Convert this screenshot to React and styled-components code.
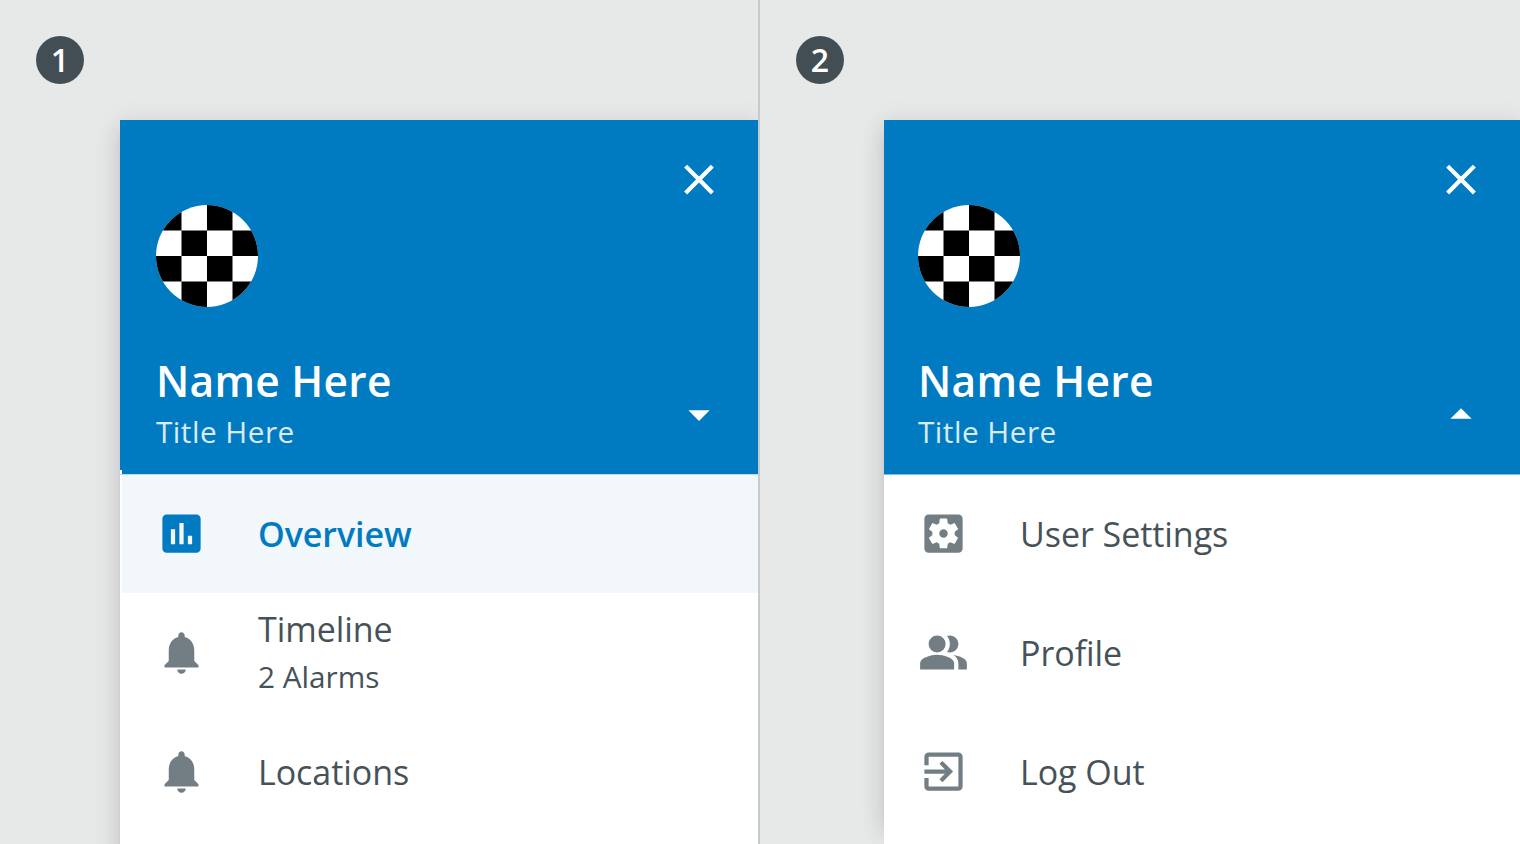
import React from "react";
import styled, { createGlobalStyle } from "styled-components";

const Global = createGlobalStyle`
  * { box-sizing: border-box; }
  body { margin: 0; background: #e7e9e8; font-family: "Open Sans", "Liberation Sans", sans-serif; }
`;

const Page = styled.div`
  display: grid;
  grid-template-columns: 760px 760px;
  height: 844px;
  overflow: hidden;
`;

const Pane = styled.section`
  display: flex;
  flex-direction: column;
  height: 844px;
  overflow: hidden;
  padding: 36px 0 0 ${(p) => p.$inset}px;
  border-right: ${(p) => (p.$divided ? "2px solid #c8c9ca" : "none")};
`;

const Step = styled.div`
  width: 48px;
  height: 48px;
  margin: 0 0 36px ${(p) => p.$shift}px;
  flex: none;
  border-radius: 50%;
  background: #434e54;
  color: #fff;
  font-size: 32px;
  font-weight: 600;
  line-height: 47px;
  text-align: center;
`;

const Drawer = styled.div`
  position: relative;
  isolation: isolate;
  flex: none;
  height: 724px;

  &::before {
    content: "";
    position: absolute;
    z-index: -1;
    inset: 0 0 ${(p) => p.$shadowEnd}px 0;
    box-shadow: 0 8px 10px -5px rgba(0, 15, 40, 0.12), 0 10px 22px 1px rgba(0, 15, 40, 0.09),
      0 5px 28px 3px rgba(0, 15, 40, 0.07);
  }
`;

const Surface = styled.div`
  height: 724px;
  background: #fff;
`;

const Glyph = styled.svg`
  display: block;
  flex: none;
  width: 51px;
  height: 51px;
  fill: currentColor;
`;

const Header = styled.header`
  display: flex;
  flex-direction: column;
  height: 354px;
  padding: 34px 33px 0 ${(p) => p.$pad}px;
  background: ${(p) =>
    p.$notched
      ? "linear-gradient(#fff, #fff) left bottom / 2px 4px no-repeat, #007bc1"
      : "#007bc1"};
  color: #fff;

  ${Glyph} {
    width: 52px;
  }
`;

const CloseButton = styled.div`
  align-self: flex-end;
  height: 51px;
`;

const Avatar = styled.svg`
  display: block;
  width: 102px;
  height: 102px;
`;

const Account = styled.div`
  display: flex;
  justify-content: space-between;
  margin-top: 44px;
`;

const Name = styled.div`
  font-size: 42.5px;
  line-height: 59px;
  font-weight: 600;
  letter-spacing: 0.27px;
  white-space: nowrap;
`;

const Title = styled.div`
  font-size: 29.75px;
  line-height: 42px;
  margin-top: 1px;
  letter-spacing: 0.48px;
  opacity: 0.85;
`;

const Caret = styled.div`
  padding-top: 38px;
`;

const List = styled.nav`
  display: flex;
  flex-direction: column;
  border-top: 1px solid ${(p) => (p.$tinted ? "#bcdaec" : "#80bde0")};
`;

const Item = styled.div`
  display: flex;
  align-items: center;
  height: 119px;
  margin-left: ${(p) => p.$edge}px;
  padding-left: 34px;
  gap: 51px;
  background: ${(p) => (p.$active ? "#f2f7fb" : "transparent")};
  color: ${(p) => (p.$active ? "#007bc1" : "#727e84")};

  &:first-child {
    height: 118px;
  }

  &:first-child > ${Glyph} {
    margin-bottom: 1px;
  }
`;

const Label = styled.div`
  font-size: 34px;
  line-height: 48px;
  letter-spacing: -0.05px;
  font-weight: ${(p) => (p.$active ? 600 : 400)};
  color: ${(p) => (p.$active ? "#007bc1" : "#465258")};
`;

const Note = styled.div`
  font-size: 29.75px;
  line-height: 48px;
  color: #465258;
`;

const paths = {
  close: "M19 6.41L17.59 5 12 10.59 6.41 5 5 6.41 10.59 12 5 17.59 6.41 19 12 13.41 17.59 19 19 17.59 13.41 12z",
  down: "M7 10l5 5 5-5z",
  up: "M7 14l5-5 5 5z",
  chart: "M19 3H5c-1.1 0-2 .9-2 2v14c0 1.1.9 2 2 2h14c1.1 0 2-.9 2-2V5c0-1.1-.9-2-2-2zM9 17H7v-7h2v7zm4 0h-2V7h2v10zm4 0h-2v-4h2v4z",
  bell: "M12 22c1.1 0 2-.9 2-2h-4c0 1.1.89 2 2 2zm6-6v-5c0-3.07-1.64-5.64-4.5-6.32V4c0-.83-.67-1.5-1.5-1.5s-1.5.67-1.5 1.5v.68C7.63 5.36 6 7.92 6 11v5l-2 2v1h16v-1l-2-2z",
  settings: "M12 10c-1.1 0-2 .9-2 2s.9 2 2 2 2-.9 2-2-.9-2-2-2zm7-7H5c-1.11 0-2 .9-2 2v14c0 1.1.89 2 2 2h14c1.11 0 2-.9 2-2V5c0-1.1-.89-2-2-2zm-1.75 9c0 .23-.02.46-.05.68l1.48 1.16c.13.11.17.3.08.45l-1.4 2.42c-.09.15-.27.21-.43.15l-1.74-.7c-.36.28-.76.51-1.18.69l-.26 1.85c-.03.17-.18.3-.35.3h-2.8c-.17 0-.32-.13-.35-.29l-.26-1.85c-.43-.18-.82-.41-1.18-.69l-1.74.7c-.16.06-.34 0-.43-.15l-1.4-2.42c-.09-.15-.05-.34.08-.45l1.48-1.16c-.03-.23-.05-.46-.05-.69 0-.23.02-.46.05-.68l-1.48-1.16c-.13-.11-.17-.3-.08-.45l1.4-2.42c.09-.15.27-.21.43-.15l1.74.7c.36-.28.76-.51 1.18-.69l.26-1.85c.03-.17.18-.3.35-.3h2.8c.17 0 .32.13.35.29l.26 1.85c.43.18.82.41 1.18.69l1.74-.7c.16-.06.34 0 .43.15l1.4 2.42c.09.15.05.34-.08.45l-1.48 1.16c.03.23.05.46.05.69z",
  people: "M16.67 13.13C18.04 14.06 19 15.32 19 17v3h4v-3c0-2.18-3.57-3.47-6.33-3.87zM9 4a4 4 0 1 0 0 8 4 4 0 0 0 0-8zM15 12c2.21 0 4-1.79 4-4s-1.79-4-4-4c-.47 0-.91.1-1.33.24C14.5 5.27 15 6.58 15 8s-.5 2.73-1.33 3.76c.42.14.86.24 1.33.24zM9 13c-2.67 0-8 1.34-8 4v3h16v-3c0-2.66-5.33-4-8-4z",
  exit: "M10.09 15.59L11.5 17l5-5-5-5-1.41 1.41L12.67 11H3v2h9.67l-2.58 2.59zM19 3H5c-1.11 0-2 .9-2 2v4h2V5h14v14H5v-4H3v4c0 1.1.89 2 2 2h14c1.1 0 2-.9 2-2V5c0-1.1-.9-2-2-2z",
};

const Icon = ({ name }) => (
  <Glyph viewBox="0 0 24 24">
    <path d={paths[name]} />
  </Glyph>
);

const Checker = ({ id }) => (
  <Avatar viewBox="0 0 4 4">
    <clipPath id={id}>
      <circle cx="2" cy="2" r="2" />
    </clipPath>
    <g clipPath={`url(#${id})`}>
      <rect width="4" height="4" fill="#fff" />
      <path d="M0 0h1v1H0zM2 0h1v1H2zM1 1h1v1H1zM3 1h1v1H3zM0 2h1v1H0zM2 2h1v1H2zM1 3h1v1H1zM3 3h1v1H3z" />
    </g>
  </Avatar>
);

const Menu = ({ id, caret, pad, edge, shadowEnd, items }) => (
  <Drawer $shadowEnd={shadowEnd}>
    <Surface>
      <Header $pad={pad} $notched={edge > 0}>
        <CloseButton><Icon name="close" /></CloseButton>
        <Checker id={id} />
        <Account>
          <div>
            <Name>Name Here</Name>
            <Title>Title Here</Title>
          </div>
          <Caret><Icon name={caret} /></Caret>
        </Account>
      </Header>
      <List $tinted={edge > 0}>
        {items.map((item) => (
          <Item key={item.label} $active={item.active} $edge={edge}>
            <Icon name={item.icon} />
            <div>
              <Label $active={item.active}>{item.label}</Label>
              {item.note && <Note>{item.note}</Note>}
            </div>
          </Item>
        ))}
      </List>
    </Surface>
  </Drawer>
);

const mainItems = [
  { icon: "chart", label: "Overview", active: true },
  { icon: "bell", label: "Timeline", note: "2 Alarms" },
  { icon: "bell", label: "Locations" },
];

const userItems = [
  { icon: "settings", label: "User Settings" },
  { icon: "people", label: "Profile" },
  { icon: "exit", label: "Log Out" },
];

export default function App() {
  return (
    <Page>
      <Global />
      <Pane $inset={120} $divided>
        <Step $shift={-84}>1</Step>
        <Menu id="avatar-main" caret="down" pad={36} edge={2} shadowEnd={-60} items={mainItems} />
      </Pane>
      <Pane $inset={124}>
        <Step $shift={-88}>2</Step>
        <Menu id="avatar-user" caret="up" pad={34} edge={0} shadowEnd={20} items={userItems} />
      </Pane>
    </Page>
  );
}
